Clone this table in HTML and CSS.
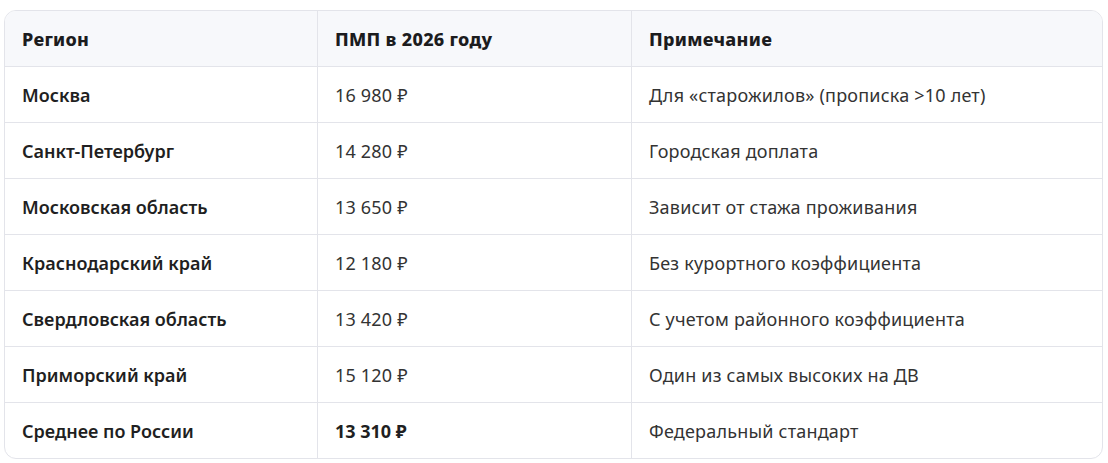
FILE: index.html
```html
<!DOCTYPE html>
<html lang="ru">
<head>
<meta charset="utf-8">
<link rel="stylesheet" href="styles.css">
</head>
<body>
<div class="wrap">
<table class="tbl">
<thead>
<tr><th>Регион</th><th>ПМП в 2026 году</th><th>Примечание</th></tr>
</thead>
<tbody>
<tr><td class="reg">Москва</td><td>16 980 ₽</td><td>Для «старожилов» (прописка &gt;10 лет)</td></tr>
<tr><td class="reg">Санкт-Петербург</td><td>14 280 ₽</td><td>Городская доплата</td></tr>
<tr><td class="reg">Московская область</td><td>13 650 ₽</td><td>Зависит от стажа проживания</td></tr>
<tr><td class="reg">Краснодарский край</td><td>12 180 ₽</td><td>Без курортного коэффициента</td></tr>
<tr><td class="reg">Свердловская область</td><td>13 420 ₽</td><td>С учетом районного коэффициента</td></tr>
<tr><td class="reg">Приморский край</td><td>15 120 ₽</td><td>Один из самых высоких на ДВ</td></tr>
<tr><td class="reg">Среднее по России</td><td class="strong">13 310 ₽</td><td>Федеральный стандарт</td></tr>
</tbody>
</table>
</div>
</body>
</html>
```
FILE: styles.css
```css
html, body { margin: 0; padding: 0; background: #fff; }
body { font-family: "Noto Sans", "Open Sans", sans-serif; }
.wrap {
  margin: 10px 5px 0 4px;
  border: 1px solid #e3e4ea;
  border-radius: 12px;
  overflow: hidden;
}
.tbl {
  width: 100%;
  border-collapse: separate;
  border-spacing: 0;
  table-layout: fixed;
  font-size: 18px;
  color: #333;
}
.tbl th:nth-child(1) { width: 312px; }
.tbl th:nth-child(2) { width: 314px; }
.tbl th, .tbl td {
  height: 56px;
  padding: 0 17px;
  text-align: left;
  vertical-align: middle;
  border-left: 1px solid #e3e4ea;
  border-top: 1px solid #e3e4ea;
  box-sizing: border-box;
  white-space: nowrap;
  letter-spacing: 0.2px;
}
.tbl th:first-child, .tbl td:first-child { border-left: none; }
.tbl thead th { height: 55px; border-top: none; background: #f7f8fb; font-weight: 800; color: #1c1c1e; letter-spacing: 0.3px; }
.tbl td.reg { font-weight: 600; color: #1f1f22; letter-spacing: 0; }
.tbl td.strong { font-weight: 700; color: #1f1f22; letter-spacing: 0; }
```
